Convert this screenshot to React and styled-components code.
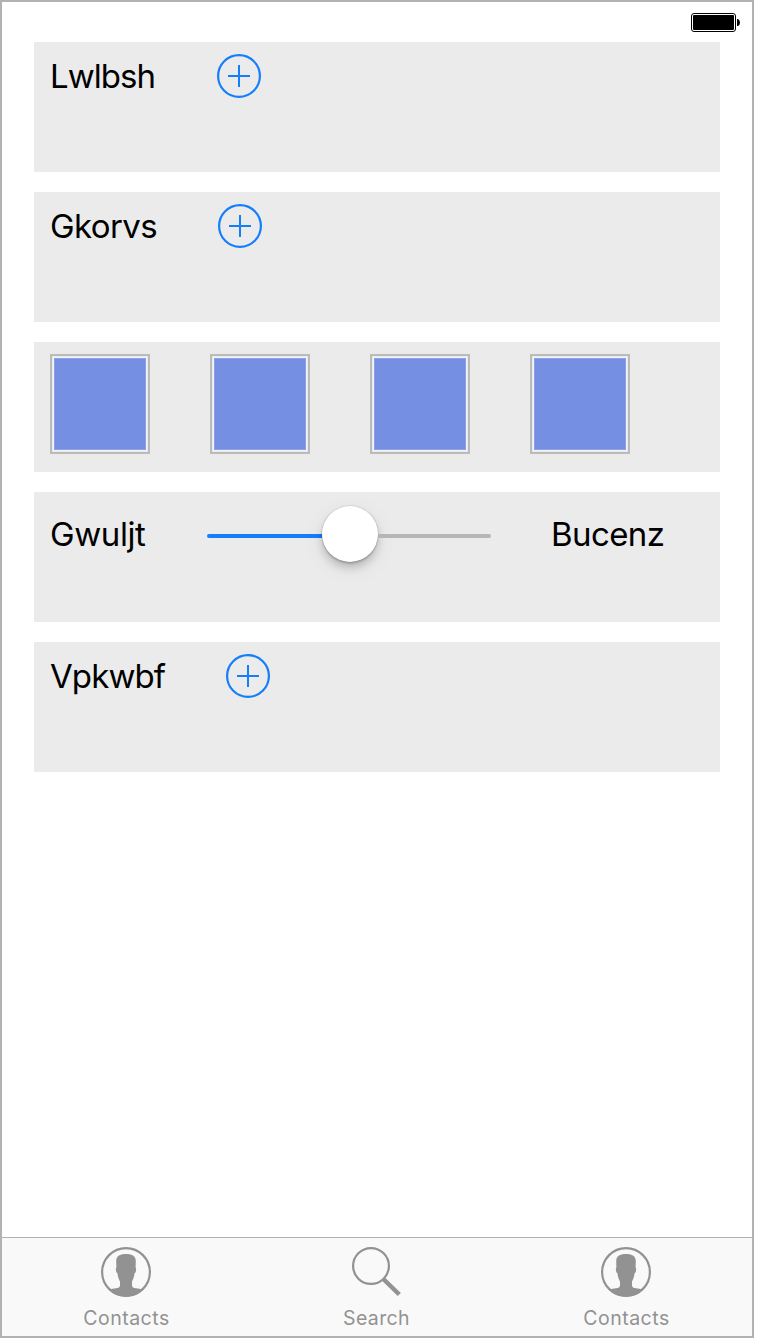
import React from 'react';
import styled, { createGlobalStyle } from 'styled-components';

const GlobalStyle = createGlobalStyle`
  * { box-sizing: border-box; }
  body { margin: 0; background: #fff; font-family: Inter, "Liberation Sans", sans-serif; }
`;

const Screen = styled.div`
  width: 754px;
  height: 1338px;
  display: flex;
  flex-direction: column;
  border: 2px solid #b2b2b2;
  background: #fff;
`;

const StatusBar = styled.header`
  height: 40px;
  display: flex;
  justify-content: flex-end;
  padding: 11px 12px 0 0;
`;

const Content = styled.main`
  flex: 1;
  display: flex;
  flex-direction: column;
  gap: 20px;
  padding: 0 32px;
`;

const Row = styled.section`
  height: 130px;
  display: flex;
  align-items: flex-start;
  gap: 60px;
  padding: 12px 16px;
  background: #ebebeb;
`;

const Label = styled.span`
  flex: none;
  width: ${p => p.$width}px;
  height: 44px;
  margin-top: ${p => p.$drop || 0}px;
  font-size: 33px;
  line-height: 44px;
  letter-spacing: ${p => p.$tracking || 0}px;
  white-space: nowrap;
  color: #000;
`;

const IconButton = styled.button`
  display: block;
  width: 44px;
  height: 44px;
  padding: 0;
  border: 0;
  background: none;
  svg { display: block; }
`;

const Swatch = styled.div`
  width: 100px;
  height: 100px;
  padding: 1px;
  border: 2px solid #babbba;
  background: #e9e9e9;
`;

const SwatchFill = styled.div`
  height: 100%;
  border: 1px solid #f2f5fd;
  background: #758fe2;
  box-shadow: inset 0 0 0 1px #8ba0e6;
`;

const Slider = styled.div`
  width: 284px;
  height: 56px;
  margin-top: 2px;
  display: flex;
  align-items: center;
`;

const Track = styled.div`
  flex: ${p => (p.$filled ? '0 0 115px' : '1')};
  height: 4px;
  margin-top: 4px;
  border-radius: ${p => (p.$filled ? '2px 0 0 2px' : '0 2px 2px 0')};
  background: ${p => (p.$filled ? '#157efb' : '#b6b6b6')};
`;

const Thumb = styled.div`
  flex: none;
  width: 56px;
  height: 56px;
  border-radius: 50%;
  background: #fff;
  box-shadow: 0 0 1px 0.5px rgba(0,0,0,.14), 0 6px 9px rgba(0,0,0,.18), 0 2px 2px rgba(0,0,0,.14), 0 6px 26px rgba(0,0,0,.06);
`;

const TabBar = styled.nav`
  height: 99px;
  display: flex;
  border-top: 1px solid #b2b2b2;
  background: #f9f9f9;
`;

const Tab = styled.div`
  flex: 0 0 250px;
  margin-left: ${p => (p.$first ? '-1px' : 0)};
  display: flex;
  flex-direction: column;
  align-items: center;
  padding-top: 9px;
  color: #929292;
  svg { display: block; }
`;

const TabLabel = styled.span`
  margin-top: 9px;
  padding-left: 1px;
  font-size: 19.5px;
  line-height: 24px;
  letter-spacing: ${p => p.$tracking}px;
`;

const Battery = () => (
  <svg width="49" height="19" viewBox="0 0 49 19">
    <rect x="0.5" y="0.5" width="44" height="18" rx="2.5" fill="#fff" stroke="#000" />
    <rect x="2" y="2" width="41" height="15" rx="1" fill="#000" />
    <path d="M46 6h1q2 1 2 3.5t-2 3.5h-1z" fill="#000" />
  </svg>
);

const AddButton = () => (
  <IconButton aria-label="Add">
    <svg width="44" height="44" viewBox="0 0 44 44" fill="none" stroke="#157efb">
      <circle cx="22" cy="22" r="20.9" strokeWidth="2.2" />
      <path d="M11 22h22M22 11v22" strokeWidth="2" />
    </svg>
  </IconButton>
);

const ContactIcon = () => (
  <svg width="50" height="50" viewBox="0 0 50 50">
    <circle cx="25" cy="25" r="23.9" fill="none" stroke="currentColor" strokeWidth="2.2" />
    <path
      fill="currentColor"
      d="M15.2 14C15.2 9.500 18.500 7 25 7S34.800 9.500 34.800 14L34.600 20.500C35.400 21 35.200 23 34.800 24.600C34.500 25.700 34.100 26 33.600 26.100C33.200 29.500 32.300 32.500 31 34.500V38.500C31.200 40.600 32.500 41 35 41.300C37.500 41.600 39.500 42 41.500 43C37 47.500 31.500 49.500 25 49.500S13 47.500 8.500 43C10.500 42 12.500 41.600 15 41.300C17.500 41 18.800 40.600 19 38.500V34.500C17.700 32.500 16.800 29.500 16.400 26.100C15.900 26 15.500 25.700 15.200 24.600C14.800 23 14.600 21 15.400 20.500Z"
    />
  </svg>
);

const SearchIcon = () => (
  <svg width="50" height="50" viewBox="0 0 50 50" fill="none" stroke="currentColor">
    <circle cx="20" cy="19" r="17.9" strokeWidth="2.2" />
    <path d="M32.3 32L48.3 47.5" strokeWidth="4.5" />
  </svg>
);

const tabs = [
  { name: 'Contacts', icon: ContactIcon, tracking: 0.5 },
  { name: 'Search', icon: SearchIcon, tracking: 0.35 },
  { name: 'Contacts', icon: ContactIcon, tracking: 0.5 },
];

export default function App() {
  return (
    <>
      <GlobalStyle />
      <Screen>
        <StatusBar><Battery /></StatusBar>
        <Content>
          <Row>
            <Label $width={107} $tracking={-0.95}>Lwlbsh</Label>
            <AddButton />
          </Row>
          <Row>
            <Label $width={108} $tracking={-0.6}>Gkorvs</Label>
            <AddButton />
          </Row>
          <Row>
            {[0, 1, 2, 3].map(i => <Swatch key={i}><SwatchFill /></Swatch>)}
          </Row>
          <Row>
            <Label $width={97} $drop={8} $tracking={-0.4}>Gwuljt</Label>
            <Slider>
              <Track $filled />
              <Thumb />
              <Track />
            </Slider>
            <Label $width={114} $drop={8} $tracking={-0.6}>Bucenz</Label>
          </Row>
          <Row>
            <Label $width={116} $tracking={-0.9}>Vpkwbf</Label>
            <AddButton />
          </Row>
        </Content>
        <TabBar>
          {tabs.map((tab, i) => (
            <Tab key={i} $first={i === 0}>
              <tab.icon />
              <TabLabel $tracking={tab.tracking}>{tab.name}</TabLabel>
            </Tab>
          ))}
        </TabBar>
      </Screen>
    </>
  );
}
